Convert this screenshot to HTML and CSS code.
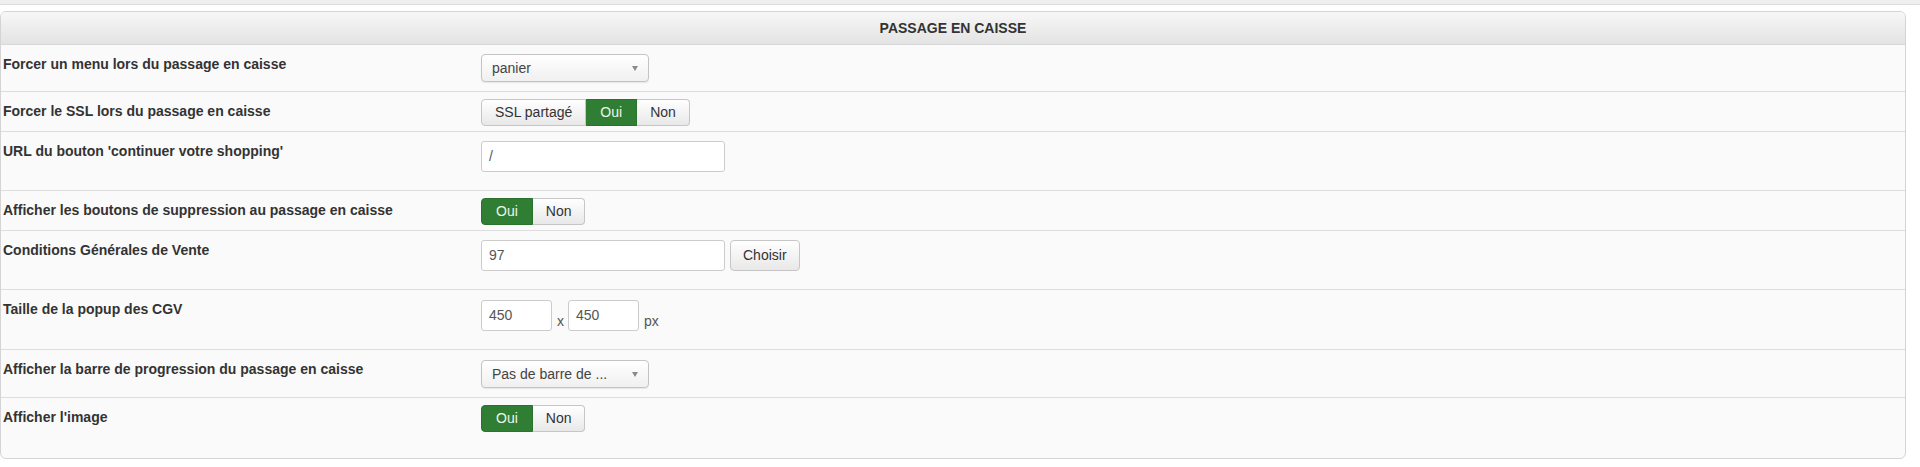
FILE: index.html
```html
<!DOCTYPE html>
<html lang="fr">
<head>
    <meta charset="UTF-8">
    <title>Passage en caisse</title>
    <link rel="stylesheet" href="styles.css">
</head>
<body>
    <div class="topbar"></div>
    <div class="panel">
        <div class="panel-head">PASSAGE EN CAISSE</div>

        <div class="row">
            <div class="key">Forcer un menu lors du passage en caisse</div>
            <div class="val"><div class="select">panier<span class="caret"></span></div></div>
        </div>

        <div class="row">
            <div class="key">Forcer le SSL lors du passage en caisse</div>
            <div class="val">
                <div class="btn-group">
                    <span class="btn">SSL partagé</span><span class="btn active">Oui</span><span class="btn">Non</span>
                </div>
            </div>
        </div>

        <div class="row">
            <div class="key">URL du bouton 'continuer votre shopping'</div>
            <div class="val"><div class="input wide">/</div></div>
        </div>

        <div class="row">
            <div class="key">Afficher les boutons de suppression au passage en caisse</div>
            <div class="val">
                <div class="btn-group">
                    <span class="btn active">Oui</span><span class="btn">Non</span>
                </div>
            </div>
        </div>

        <div class="row">
            <div class="key">Conditions Générales de Vente</div>
            <div class="val inline">
                <div class="input wide">97</div>
                <span class="btn solo">Choisir</span>
            </div>
        </div>

        <div class="row tall">
            <div class="key">Taille de la popup des CGV</div>
            <div class="val inline">
                <div class="input small">450</div>
                <span class="unit">x</span>
                <div class="input small">450</div>
                <span class="unit">px</span>
            </div>
        </div>

        <div class="row tall">
            <div class="key">Afficher la barre de progression du passage en caisse</div>
            <div class="val"><div class="select">Pas de barre de ...<span class="caret"></span></div></div>
        </div>

        <div class="row last">
            <div class="key">Afficher l'image</div>
            <div class="val">
                <div class="btn-group">
                    <span class="btn active">Oui</span><span class="btn">Non</span>
                </div>
            </div>
        </div>
    </div>
</body>
</html>
```

FILE: styles.css
```css
body {
    margin: 0;
    background: #ffffff;
    font-family: "Liberation Sans", Arial, sans-serif;
    font-size: 14px;
    color: #333333;
}
.topbar {
    height: 4px;
    background: #efefef;
    border-bottom: 1px solid #dcdcdc;
}
.panel {
    margin: 6px 14px 0 0;
    border: 1px solid #d4d4d4;
    border-radius: 6px;
    background: #fafafa;
    overflow: hidden;
}
.panel-head {
    height: 32px;
    line-height: 32px;
    text-align: center;
    font-weight: bold;
    font-size: 14px;
    color: #333333;
    background: linear-gradient(#f7f7f7, #e3e3e3);
    border-bottom: 1px solid #d8d8d8;
}
.row {
    display: grid;
    grid-template-columns: 480px 1fr;
    border-bottom: 1px solid #dddddd;
}
.row.last {
    border-bottom: none;
}
.key {
    padding: 10px 0 0 2px;
    font-weight: bold;
    line-height: 18px;
    color: #333333;
}
.val {
    padding: 8px 0 5px;
    display: flex;
    align-items: flex-start;
}
.row.tall .val {
    padding: 9px 0 5px;
}
.row.last .val {
    padding-bottom: 26px;
}
.select {
    position: relative;
    box-sizing: border-box;
    width: 168px;
    height: 28px;
    margin: 1px 0 4px;
    padding-left: 10px;
    line-height: 26px;
    color: #444444;
    border: 1px solid #c4c4c4;
    border-radius: 4px;
    background: linear-gradient(#ffffff, #f0f0f0);
    box-shadow: 0 1px 1px rgba(0, 0, 0, 0.08);
}
.caret {
    position: absolute;
    right: 10px;
    top: 11px;
    border-left: 3px solid transparent;
    border-right: 3px solid transparent;
    border-top: 5px solid #8a8a8a;
}
.btn-group {
    display: flex;
    margin-top: -1px;
}
.btn {
    box-sizing: border-box;
    height: 27px;
    padding: 0 13px;
    line-height: 25px;
    color: #333333;
    border: 1px solid #c6c6c6;
    background: linear-gradient(#ffffff, #e8e8e8);
}
.btn-group .btn + .btn {
    border-left: none;
}
.btn-group .btn:first-child {
    border-radius: 4px 0 0 4px;
}
.btn-group .btn:last-child {
    border-radius: 0 4px 4px 0;
}
.btn.active {
    background: #2f7e33;
    border-color: #2a722e;
    color: #eef5ee;
    padding: 0 14px;
}
.btn.solo {
    height: 31px;
    line-height: 29px;
    margin: 1px 0 0 5px;
    padding: 0 12px;
    border-radius: 4px;
}
.input {
    box-sizing: border-box;
    height: 31px;
    margin: 1px 0 13px;
    padding-left: 7px;
    line-height: 29px;
    color: #555555;
    background: #ffffff;
    border: 1px solid #cccccc;
    border-radius: 3px;
}
.input.wide {
    width: 244px;
}
.input.small {
    width: 71px;
}
.unit {
    margin: 13px 4px 0 5px;
    line-height: 18px;
    color: #555555;
}
```
